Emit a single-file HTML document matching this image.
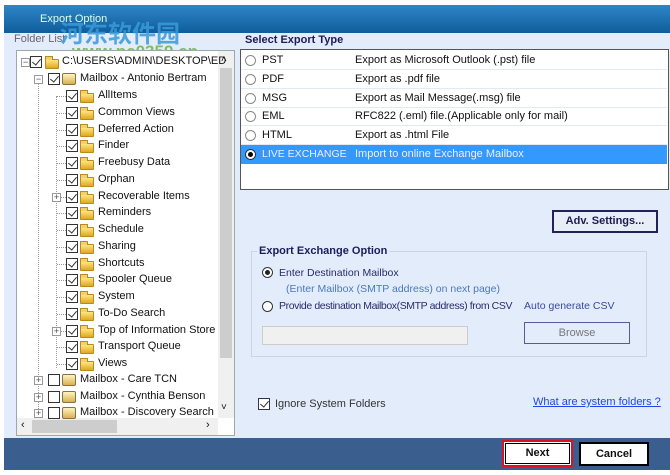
<!DOCTYPE html>
<html><head><style>
*{margin:0;padding:0;box-sizing:border-box}
body{width:670px;height:475px;background:#fff;font-family:"Liberation Sans","DejaVu Sans",sans-serif;font-size:11px;position:relative;overflow:hidden;color:#222}
.a{position:absolute}
.cb{position:absolute;width:12px;height:12px;border:1px solid #333;background:#fff}
.cb.k::after{content:"";position:absolute;left:3px;top:0px;width:4px;height:7px;border:solid #333;border-width:0 1.5px 1.5px 0;transform:rotate(40deg)}
.fd{position:absolute;width:14px;height:10px;background:linear-gradient(#ffe680,#e0a820);border:1px solid #b88a20;border-radius:1px}
.fd::before{content:"";position:absolute;left:-1px;top:-4px;width:6px;height:3px;background:#f0d070;border:1px solid #b88a20;border-bottom:none}
.mb{position:absolute;width:14px;height:12px;background:linear-gradient(#fff4c0,#d8b050);border:1px solid #8a7040;border-radius:2px}
.t{position:absolute;white-space:nowrap;color:#111}
.pl{position:absolute;width:9px;height:9px;border:1px solid #999;background:#fff;font-size:9px;line-height:7px;text-align:center;color:#446}
.row{position:absolute;left:241px;width:426px;height:19px;border-bottom:1px solid #e4e8f0;color:#2a2a6a}
.rd{position:absolute;width:11px;height:11px;border:1px solid #888;border-radius:50%;background:#fff}
</style></head><body>
<div class="a" style="left:4px;top:5px;width:666px;height:465px;background:#e3ecfa"></div>
<div class="a" style="left:4px;top:5px;width:666px;height:28px;background:linear-gradient(#2e86c8,#0f5d9a)"></div>
<div class="t" style="left:40px;top:13px;color:#dfe;font-size:11px">Export Option</div>
<div class="t" style="left:14px;top:33px;color:#667;font-size:11px">Folder List</div>
<div class="t" style="left:60px;top:14px;color:#3a9ad8;font-size:24px;font-weight:bold;font-family:'Noto Sans CJK SC',sans-serif;opacity:.85">河东软件园</div>
<div class="t" style="left:72px;top:42px;color:#6ab040;font-size:17px;font-weight:bold;opacity:.8">www.pc0359.cn</div>
<div class="a" style="left:16px;top:50px;width:219px;height:386px;background:#fff;border:1px solid #9aa"></div>
<div class="a" style="left:218px;top:51px;width:16px;height:367px;background:#f0f0f0"></div>
<div class="a" style="left:220px;top:68px;width:12px;height:290px;background:#cdcdcd"></div>
<div class="t" style="left:221px;top:54px;font-size:10px">˄</div>
<div class="t" style="left:221px;top:402px;font-size:10px">˅</div>
<div class="a" style="left:17px;top:418px;width:201px;height:17px;background:#f0f0f0"></div>
<div class="a" style="left:32px;top:420px;width:85px;height:13px;background:#cdcdcd"></div>
<div class="t" style="left:21px;top:419px;font-size:11px">‹</div>
<div class="t" style="left:206px;top:419px;font-size:11px">›</div>
<div class="a" style="left:56px;top:96px;height:272px;border-left:1px dotted #999"></div>
<div class="a" style="left:38px;top:79px;height:336px;border-left:1px dotted #999"></div>
<div class="pl" style="left:21px;top:58px">−</div>
<div class="cb k" style="left:30px;top:56px"></div><div class="fd" style="left:45px;top:59px"></div>
<div class="t" style="left:62px;top:55px">C:\USERS\ADMIN\DESKTOP\ED</div>
<div class="pl" style="left:34px;top:75px">−</div>
<div class="cb k" style="left:48px;top:73px"></div><div class="mb" style="left:62px;top:73px"></div>
<div class="t" style="left:80px;top:72px">Mailbox - Antonio Bertram</div>
<div id="kids"></div>
<div class="pl" style="left:34px;top:376px">+</div><div class="cb" style="left:48px;top:374px"></div><div class="mb" style="left:62px;top:374px"></div><div class="t" style="left:80px;top:373px">Mailbox - Care TCN</div>
<div class="pl" style="left:34px;top:393px">+</div><div class="cb" style="left:48px;top:391px"></div><div class="mb" style="left:62px;top:391px"></div><div class="t" style="left:80px;top:390px">Mailbox - Cynthia Benson</div>
<div class="pl" style="left:34px;top:409px">+</div><div class="cb" style="left:48px;top:407px"></div><div class="mb" style="left:62px;top:407px"></div><div class="t" style="left:80px;top:406px;width:136px;overflow:hidden">Mailbox - Discovery Search M</div>
<script>
var n=["AllItems","Common Views","Deferred Action","Finder","Freebusy Data","Orphan","Recoverable Items","Reminders","Schedule","Sharing","Shortcuts","Spooler Queue","System","To-Do Search","Top of Information Store","Transport Queue","Views"];
var h="";n.forEach(function(s,i){var y=89+i*16.75;h+='<div class="a" style="left:57px;top:'+(y+7)+'px;width:9px;border-top:1px dotted #999"></div>';
if(s=="Recoverable Items"||s=="Top of Information Store")h+='<div class="pl" style="left:52px;top:'+(y+3)+'px">+</div>';
h+='<div class="cb k" style="left:66px;top:'+(y+1)+'px"></div><div class="fd" style="left:80px;top:'+(y+4)+'px"></div><div class="t" style="left:98px;top:'+y+'px">'+s+'</div>';});
document.getElementById("kids").outerHTML=h;
</script>
<div class="t" style="left:245px;top:34px;color:#1c1c5c;font-weight:bold">Select Export Type</div>
<div class="a" style="left:240px;top:49px;width:429px;height:141px;background:#fff;border:1px solid #555"></div>
<div class="row" style="top:51px"><div class="rd" style="left:4px;top:4px"></div><span class="t" style="left:21px;top:3px">PST</span><span class="t" style="left:114px;top:3px">Export as Microsoft Outlook (.pst) file</span></div>
<div class="row" style="top:70px"><div class="rd" style="left:4px;top:4px"></div><span class="t" style="left:21px;top:3px">PDF</span><span class="t" style="left:114px;top:3px">Export as .pdf file</span></div>
<div class="row" style="top:89px"><div class="rd" style="left:4px;top:4px"></div><span class="t" style="left:21px;top:3px">MSG</span><span class="t" style="left:114px;top:3px">Export as Mail Message(.msg) file</span></div>
<div class="row" style="top:107px"><div class="rd" style="left:4px;top:4px"></div><span class="t" style="left:21px;top:3px">EML</span><span class="t" style="left:114px;top:3px">RFC822 (.eml) file.(Applicable only for mail)</span></div>
<div class="row" style="top:126px"><div class="rd" style="left:4px;top:4px"></div><span class="t" style="left:21px;top:3px">HTML</span><span class="t" style="left:114px;top:3px">Export as .html File</span></div>
<div class="row" style="top:145px;background:#3399ff;border:none"><div class="rd" style="left:4px;top:4px;border-color:#333"><div class="a" style="left:2px;top:2px;width:5px;height:5px;border-radius:50%;background:#000"></div></div><span class="t" style="left:21px;top:3px;color:#eef;font-size:10.5px">LIVE EXCHANGE</span><span class="t" style="left:114px;top:3px;color:#eef">Import to online Exchange Mailbox</span></div>
<div class="a" style="left:552px;top:210px;width:106px;height:23px;border:2px solid #22225a;background:#e8eef8;text-align:center;line-height:19px;font-weight:bold;color:#1c1c4c">Adv. Settings...</div>
<div class="a" style="left:251px;top:251px;width:396px;height:106px;border:1px solid #ccd4e0"></div>
<div class="t" style="left:257px;top:245px;background:#e3ecfa;padding:0 2px;color:#1c1c5c;font-weight:bold">Export Exchange Option</div>
<div class="rd" style="left:262px;top:267px;border-color:#333"><div class="a" style="left:2px;top:2px;width:5px;height:5px;border-radius:50%;background:#222"></div></div>
<div class="t" style="left:279px;top:267px;color:#2a2a6a;font-size:10.5px">Enter Destination Mailbox</div>
<div class="t" style="left:286px;top:283px;color:#4a7ac0;font-size:10.5px">(Enter Mailbox (SMTP address) on next page)</div>
<div class="rd" style="left:262px;top:301px;border-color:#333"></div>
<div class="t" style="left:279px;top:300px;color:#2a2a6a;font-size:10.5px;letter-spacing:-0.4px">Provide destination Mailbox(SMTP address) from CSV</div>
<div class="t" style="left:524px;top:300px;color:#3a4aa0;font-size:10.5px">Auto generate CSV</div>
<div class="a" style="left:262px;top:326px;width:206px;height:19px;background:#f0f0f0;border:1px solid #ccc"></div>
<div class="a" style="left:524px;top:322px;width:106px;height:22px;border:1px solid #5a5a9a;text-align:center;line-height:20px;color:#777">Browse</div>
<div class="cb k" style="left:258px;top:398px;border-color:#335"></div>
<div class="t" style="left:275px;top:398px;color:#333">Ignore System Folders</div>
<div class="t" style="left:533px;top:396px;color:#2244ee;text-decoration:underline">What are system folders ?</div>
<div class="a" style="left:4px;top:438px;width:666px;height:32px;background:#3a5e8e"></div>
<div class="a" style="left:502px;top:440px;width:71px;height:27px;border:2px solid #e01020;background:#fff"><div class="a" style="left:1px;top:1px;width:65px;height:21px;border:1px solid #000;text-align:center;line-height:19px;font-weight:bold;color:#111">Next</div></div>
<div class="a" style="left:579px;top:442px;width:70px;height:24px;border:2px solid #000;background:#fff;text-align:center;line-height:20px;font-weight:bold;color:#111">Cancel</div>
</body></html>
